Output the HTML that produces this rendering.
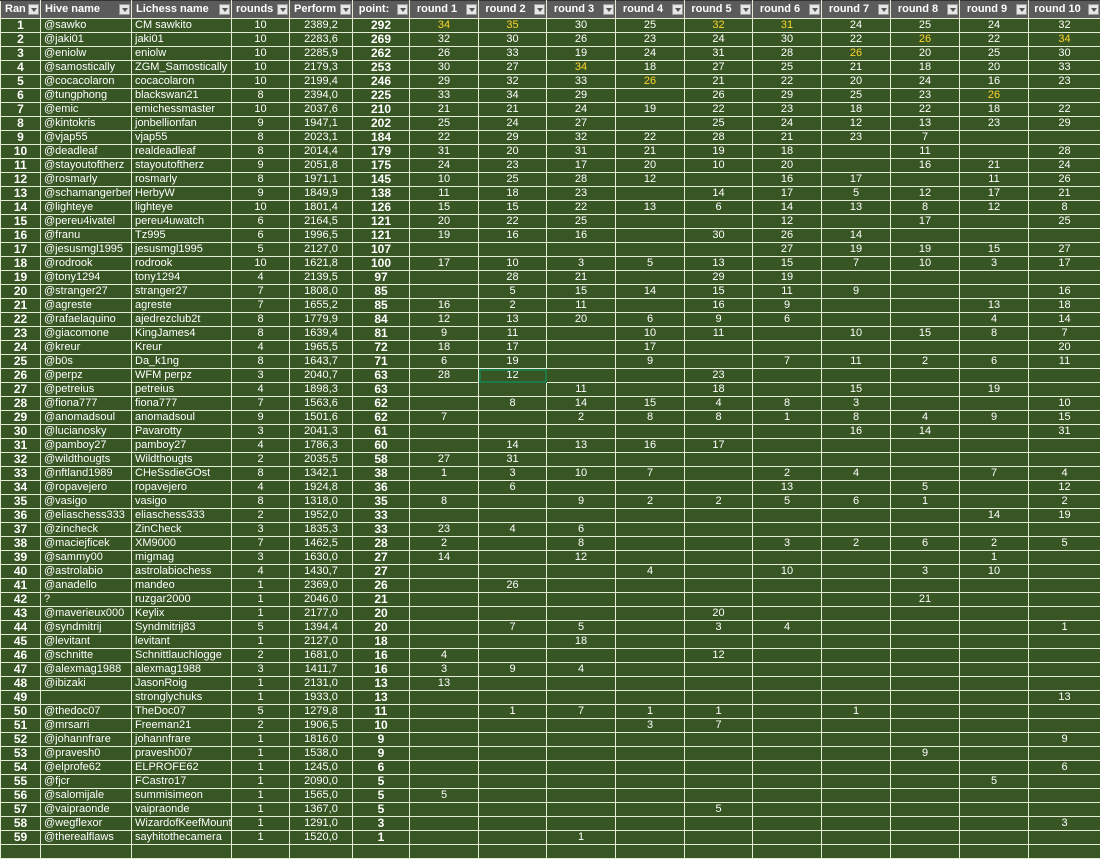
<!DOCTYPE html>
<html><head><meta charset="utf-8"><style>
body{margin:0;background:#375623;width:1100px;height:848px;overflow:hidden}
table{border-collapse:collapse;table-layout:fixed;width:1100px;font-family:"Liberation Sans",sans-serif;font-size:11px;color:#fff}
td,th{padding:0;border:1px solid #e4ecd8;height:13px;line-height:13px;overflow:hidden;white-space:nowrap;text-align:center}
th{height:17px;background:#5b5b5b;font-weight:bold;font-size:11px;position:relative;text-align:left;padding-left:4px;border-color:#e4ecd8;border-top:1px solid #333}
th.c{text-align:center;padding-left:0;padding-right:14px}
th i{position:absolute;right:1px;top:3px;width:11px;height:11px;background:#e6e6e6;border:1px solid #999;box-sizing:border-box}
th i:after{content:"";position:absolute;left:2px;top:3px;border-left:3px solid transparent;border-right:3px solid transparent;border-top:4px solid #555}
td:nth-child(1),td:nth-child(6){font-weight:bold;font-size:12px}
td:nth-child(2),td:nth-child(3){text-align:left;padding-left:3px}
.y{color:#ffd22e}
.s{outline:2px solid #1f7a4a;outline-offset:-2px}
</style></head><body>
<table>
<colgroup><col style="width:40px"><col style="width:91px"><col style="width:100px"><col style="width:58px"><col style="width:63px"><col style="width:57px"><col style="width:69px"><col style="width:68px"><col style="width:69px"><col style="width:69px"><col style="width:68px"><col style="width:69px"><col style="width:69px"><col style="width:69px"><col style="width:69px"><col style="width:72px"></colgroup>
<tr><th>Ran<i></i></th><th>Hive name<i></i></th><th>Lichess name<i></i></th><th>rounds<i></i></th><th>Perform<i></i></th><th class="c">point:<i></i></th><th class="c">round 1<i></i></th><th class="c">round 2<i></i></th><th class="c">round 3<i></i></th><th class="c">round 4<i></i></th><th class="c">round 5<i></i></th><th class="c">round 6<i></i></th><th class="c">round 7<i></i></th><th class="c">round 8<i></i></th><th class="c">round 9<i></i></th><th class="c">round 10<i></i></th></tr>
<tr><td>1</td><td>@sawko</td><td>CM sawkito</td><td>10</td><td>2389,2</td><td>292</td><td class="y">34</td><td class="y">35</td><td>30</td><td>25</td><td class="y">32</td><td class="y">31</td><td>24</td><td>25</td><td>24</td><td>32</td></tr>
<tr><td>2</td><td>@jaki01</td><td>jaki01</td><td>10</td><td>2283,6</td><td>269</td><td>32</td><td>30</td><td>26</td><td>23</td><td>24</td><td>30</td><td>22</td><td class="y">26</td><td>22</td><td class="y">34</td></tr>
<tr><td>3</td><td>@eniolw</td><td>eniolw</td><td>10</td><td>2285,9</td><td>262</td><td>26</td><td>33</td><td>19</td><td>24</td><td>31</td><td>28</td><td class="y">26</td><td>20</td><td>25</td><td>30</td></tr>
<tr><td>4</td><td>@samostically</td><td>ZGM_Samostically</td><td>10</td><td>2179,3</td><td>253</td><td>30</td><td>27</td><td class="y">34</td><td>18</td><td>27</td><td>25</td><td>21</td><td>18</td><td>20</td><td>33</td></tr>
<tr><td>5</td><td>@cocacolaron</td><td>cocacolaron</td><td>10</td><td>2199,4</td><td>246</td><td>29</td><td>32</td><td>33</td><td class="y">26</td><td>21</td><td>22</td><td>20</td><td>24</td><td>16</td><td>23</td></tr>
<tr><td>6</td><td>@tungphong</td><td>blackswan21</td><td>8</td><td>2394,0</td><td>225</td><td>33</td><td>34</td><td>29</td><td></td><td>26</td><td>29</td><td>25</td><td>23</td><td class="y">26</td><td></td></tr>
<tr><td>7</td><td>@emic</td><td>emichessmaster</td><td>10</td><td>2037,6</td><td>210</td><td>21</td><td>21</td><td>24</td><td>19</td><td>22</td><td>23</td><td>18</td><td>22</td><td>18</td><td>22</td></tr>
<tr><td>8</td><td>@kintokris</td><td>jonbellionfan</td><td>9</td><td>1947,1</td><td>202</td><td>25</td><td>24</td><td>27</td><td></td><td>25</td><td>24</td><td>12</td><td>13</td><td>23</td><td>29</td></tr>
<tr><td>9</td><td>@vjap55</td><td>vjap55</td><td>8</td><td>2023,1</td><td>184</td><td>22</td><td>29</td><td>32</td><td>22</td><td>28</td><td>21</td><td>23</td><td>7</td><td></td><td></td></tr>
<tr><td>10</td><td>@deadleaf</td><td>realdeadleaf</td><td>8</td><td>2014,4</td><td>179</td><td>31</td><td>20</td><td>31</td><td>21</td><td>19</td><td>18</td><td></td><td>11</td><td></td><td>28</td></tr>
<tr><td>11</td><td>@stayoutoftherz</td><td>stayoutoftherz</td><td>9</td><td>2051,8</td><td>175</td><td>24</td><td>23</td><td>17</td><td>20</td><td>10</td><td>20</td><td></td><td>16</td><td>21</td><td>24</td></tr>
<tr><td>12</td><td>@rosmarly</td><td>rosmarly</td><td>8</td><td>1971,1</td><td>145</td><td>10</td><td>25</td><td>28</td><td>12</td><td></td><td>16</td><td>17</td><td></td><td>11</td><td>26</td></tr>
<tr><td>13</td><td>@schamangerbert</td><td>HerbyW</td><td>9</td><td>1849,9</td><td>138</td><td>11</td><td>18</td><td>23</td><td></td><td>14</td><td>17</td><td>5</td><td>12</td><td>17</td><td>21</td></tr>
<tr><td>14</td><td>@lighteye</td><td>lighteye</td><td>10</td><td>1801,4</td><td>126</td><td>15</td><td>15</td><td>22</td><td>13</td><td>6</td><td>14</td><td>13</td><td>8</td><td>12</td><td>8</td></tr>
<tr><td>15</td><td>@pereu4ivatel</td><td>pereu4uwatch</td><td>6</td><td>2164,5</td><td>121</td><td>20</td><td>22</td><td>25</td><td></td><td></td><td>12</td><td></td><td>17</td><td></td><td>25</td></tr>
<tr><td>16</td><td>@franu</td><td>Tz995</td><td>6</td><td>1996,5</td><td>121</td><td>19</td><td>16</td><td>16</td><td></td><td>30</td><td>26</td><td>14</td><td></td><td></td><td></td></tr>
<tr><td>17</td><td>@jesusmgl1995</td><td>jesusmgl1995</td><td>5</td><td>2127,0</td><td>107</td><td></td><td></td><td></td><td></td><td></td><td>27</td><td>19</td><td>19</td><td>15</td><td>27</td></tr>
<tr><td>18</td><td>@rodrook</td><td>rodrook</td><td>10</td><td>1621,8</td><td>100</td><td>17</td><td>10</td><td>3</td><td>5</td><td>13</td><td>15</td><td>7</td><td>10</td><td>3</td><td>17</td></tr>
<tr><td>19</td><td>@tony1294</td><td>tony1294</td><td>4</td><td>2139,5</td><td>97</td><td></td><td>28</td><td>21</td><td></td><td>29</td><td>19</td><td></td><td></td><td></td><td></td></tr>
<tr><td>20</td><td>@stranger27</td><td>stranger27</td><td>7</td><td>1808,0</td><td>85</td><td></td><td>5</td><td>15</td><td>14</td><td>15</td><td>11</td><td>9</td><td></td><td></td><td>16</td></tr>
<tr><td>21</td><td>@agreste</td><td>agreste</td><td>7</td><td>1655,2</td><td>85</td><td>16</td><td>2</td><td>11</td><td></td><td>16</td><td>9</td><td></td><td></td><td>13</td><td>18</td></tr>
<tr><td>22</td><td>@rafaelaquino</td><td>ajedrezclub2t</td><td>8</td><td>1779,9</td><td>84</td><td>12</td><td>13</td><td>20</td><td>6</td><td>9</td><td>6</td><td></td><td></td><td>4</td><td>14</td></tr>
<tr><td>23</td><td>@giacomone</td><td>KingJames4</td><td>8</td><td>1639,4</td><td>81</td><td>9</td><td>11</td><td></td><td>10</td><td>11</td><td></td><td>10</td><td>15</td><td>8</td><td>7</td></tr>
<tr><td>24</td><td>@kreur</td><td>Kreur</td><td>4</td><td>1965,5</td><td>72</td><td>18</td><td>17</td><td></td><td>17</td><td></td><td></td><td></td><td></td><td></td><td>20</td></tr>
<tr><td>25</td><td>@b0s</td><td>Da_k1ng</td><td>8</td><td>1643,7</td><td>71</td><td>6</td><td>19</td><td></td><td>9</td><td></td><td>7</td><td>11</td><td>2</td><td>6</td><td>11</td></tr>
<tr><td>26</td><td>@perpz</td><td>WFM perpz</td><td>3</td><td>2040,7</td><td>63</td><td>28</td><td class="s">12</td><td></td><td></td><td>23</td><td></td><td></td><td></td><td></td><td></td></tr>
<tr><td>27</td><td>@petreius</td><td>petreius</td><td>4</td><td>1898,3</td><td>63</td><td></td><td></td><td>11</td><td></td><td>18</td><td></td><td>15</td><td></td><td>19</td><td></td></tr>
<tr><td>28</td><td>@fiona777</td><td>fiona777</td><td>7</td><td>1563,6</td><td>62</td><td></td><td>8</td><td>14</td><td>15</td><td>4</td><td>8</td><td>3</td><td></td><td></td><td>10</td></tr>
<tr><td>29</td><td>@anomadsoul</td><td>anomadsoul</td><td>9</td><td>1501,6</td><td>62</td><td>7</td><td></td><td>2</td><td>8</td><td>8</td><td>1</td><td>8</td><td>4</td><td>9</td><td>15</td></tr>
<tr><td>30</td><td>@lucianosky</td><td>Pavarotty</td><td>3</td><td>2041,3</td><td>61</td><td></td><td></td><td></td><td></td><td></td><td></td><td>16</td><td>14</td><td></td><td>31</td></tr>
<tr><td>31</td><td>@pamboy27</td><td>pamboy27</td><td>4</td><td>1786,3</td><td>60</td><td></td><td>14</td><td>13</td><td>16</td><td>17</td><td></td><td></td><td></td><td></td><td></td></tr>
<tr><td>32</td><td>@wildthougts</td><td>Wildthougts</td><td>2</td><td>2035,5</td><td>58</td><td>27</td><td>31</td><td></td><td></td><td></td><td></td><td></td><td></td><td></td><td></td></tr>
<tr><td>33</td><td>@nftland1989</td><td>CHeSsdieGOst</td><td>8</td><td>1342,1</td><td>38</td><td>1</td><td>3</td><td>10</td><td>7</td><td></td><td>2</td><td>4</td><td></td><td>7</td><td>4</td></tr>
<tr><td>34</td><td>@ropavejero</td><td>ropavejero</td><td>4</td><td>1924,8</td><td>36</td><td></td><td>6</td><td></td><td></td><td></td><td>13</td><td></td><td>5</td><td></td><td>12</td></tr>
<tr><td>35</td><td>@vasigo</td><td>vasigo</td><td>8</td><td>1318,0</td><td>35</td><td>8</td><td></td><td>9</td><td>2</td><td>2</td><td>5</td><td>6</td><td>1</td><td></td><td>2</td></tr>
<tr><td>36</td><td>@eliaschess333</td><td>eliaschess333</td><td>2</td><td>1952,0</td><td>33</td><td></td><td></td><td></td><td></td><td></td><td></td><td></td><td></td><td>14</td><td>19</td></tr>
<tr><td>37</td><td>@zincheck</td><td>ZinCheck</td><td>3</td><td>1835,3</td><td>33</td><td>23</td><td>4</td><td>6</td><td></td><td></td><td></td><td></td><td></td><td></td><td></td></tr>
<tr><td>38</td><td>@maciejficek</td><td>XM9000</td><td>7</td><td>1462,5</td><td>28</td><td>2</td><td></td><td>8</td><td></td><td></td><td>3</td><td>2</td><td>6</td><td>2</td><td>5</td></tr>
<tr><td>39</td><td>@sammy00</td><td>migmag</td><td>3</td><td>1630,0</td><td>27</td><td>14</td><td></td><td>12</td><td></td><td></td><td></td><td></td><td></td><td>1</td><td></td></tr>
<tr><td>40</td><td>@astrolabio</td><td>astrolabiochess</td><td>4</td><td>1430,7</td><td>27</td><td></td><td></td><td></td><td>4</td><td></td><td>10</td><td></td><td>3</td><td>10</td><td></td></tr>
<tr><td>41</td><td>@anadello</td><td>mandeo</td><td>1</td><td>2369,0</td><td>26</td><td></td><td>26</td><td></td><td></td><td></td><td></td><td></td><td></td><td></td><td></td></tr>
<tr><td>42</td><td>?</td><td>ruzgar2000</td><td>1</td><td>2046,0</td><td>21</td><td></td><td></td><td></td><td></td><td></td><td></td><td></td><td>21</td><td></td><td></td></tr>
<tr><td>43</td><td>@maverieux000</td><td>Keylix</td><td>1</td><td>2177,0</td><td>20</td><td></td><td></td><td></td><td></td><td>20</td><td></td><td></td><td></td><td></td><td></td></tr>
<tr><td>44</td><td>@syndmitrij</td><td>Syndmitrij83</td><td>5</td><td>1394,4</td><td>20</td><td></td><td>7</td><td>5</td><td></td><td>3</td><td>4</td><td></td><td></td><td></td><td>1</td></tr>
<tr><td>45</td><td>@levitant</td><td>levitant</td><td>1</td><td>2127,0</td><td>18</td><td></td><td></td><td>18</td><td></td><td></td><td></td><td></td><td></td><td></td><td></td></tr>
<tr><td>46</td><td>@schnitte</td><td>Schnittlauchlogge</td><td>2</td><td>1681,0</td><td>16</td><td>4</td><td></td><td></td><td></td><td>12</td><td></td><td></td><td></td><td></td><td></td></tr>
<tr><td>47</td><td>@alexmag1988</td><td>alexmag1988</td><td>3</td><td>1411,7</td><td>16</td><td>3</td><td>9</td><td>4</td><td></td><td></td><td></td><td></td><td></td><td></td><td></td></tr>
<tr><td>48</td><td>@ibizaki</td><td>JasonRoig</td><td>1</td><td>2131,0</td><td>13</td><td>13</td><td></td><td></td><td></td><td></td><td></td><td></td><td></td><td></td><td></td></tr>
<tr><td>49</td><td></td><td>stronglychuks</td><td>1</td><td>1933,0</td><td>13</td><td></td><td></td><td></td><td></td><td></td><td></td><td></td><td></td><td></td><td>13</td></tr>
<tr><td>50</td><td>@thedoc07</td><td>TheDoc07</td><td>5</td><td>1279,8</td><td>11</td><td></td><td>1</td><td>7</td><td>1</td><td>1</td><td></td><td>1</td><td></td><td></td><td></td></tr>
<tr><td>51</td><td>@mrsarri</td><td>Freeman21</td><td>2</td><td>1906,5</td><td>10</td><td></td><td></td><td></td><td>3</td><td>7</td><td></td><td></td><td></td><td></td><td></td></tr>
<tr><td>52</td><td>@johannfrare</td><td>johannfrare</td><td>1</td><td>1816,0</td><td>9</td><td></td><td></td><td></td><td></td><td></td><td></td><td></td><td></td><td></td><td>9</td></tr>
<tr><td>53</td><td>@pravesh0</td><td>pravesh007</td><td>1</td><td>1538,0</td><td>9</td><td></td><td></td><td></td><td></td><td></td><td></td><td></td><td>9</td><td></td><td></td></tr>
<tr><td>54</td><td>@elprofe62</td><td>ELPROFE62</td><td>1</td><td>1245,0</td><td>6</td><td></td><td></td><td></td><td></td><td></td><td></td><td></td><td></td><td></td><td>6</td></tr>
<tr><td>55</td><td>@fjcr</td><td>FCastro17</td><td>1</td><td>2090,0</td><td>5</td><td></td><td></td><td></td><td></td><td></td><td></td><td></td><td></td><td>5</td><td></td></tr>
<tr><td>56</td><td>@salomijale</td><td>summisimeon</td><td>1</td><td>1565,0</td><td>5</td><td>5</td><td></td><td></td><td></td><td></td><td></td><td></td><td></td><td></td><td></td></tr>
<tr><td>57</td><td>@vaipraonde</td><td>vaipraonde</td><td>1</td><td>1367,0</td><td>5</td><td></td><td></td><td></td><td></td><td>5</td><td></td><td></td><td></td><td></td><td></td></tr>
<tr><td>58</td><td>@wegflexor</td><td>WizardofKeefMounta</td><td>1</td><td>1291,0</td><td>3</td><td></td><td></td><td></td><td></td><td></td><td></td><td></td><td></td><td></td><td>3</td></tr>
<tr><td>59</td><td>@therealflaws</td><td>sayhitothecamera</td><td>1</td><td>1520,0</td><td>1</td><td></td><td></td><td>1</td><td></td><td></td><td></td><td></td><td></td><td></td><td></td></tr>
<tr><td></td><td></td><td></td><td></td><td></td><td></td><td></td><td></td><td></td><td></td><td></td><td></td><td></td><td></td><td></td><td></td></tr>
</table>
</body></html>
